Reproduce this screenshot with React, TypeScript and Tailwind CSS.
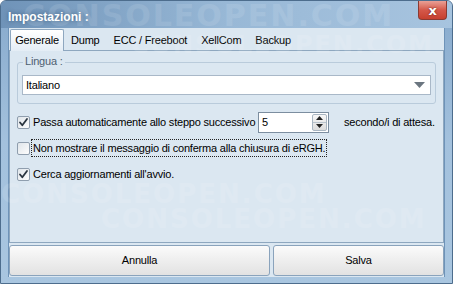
import React from "react";

const font = { fontFamily: "'Liberation Sans', Arial, sans-serif" };

function Check({ checked }: { checked: boolean }) {
  return (
    <div className="w-[13px] h-[13px] rounded-[2px] border border-[#8f9eae] bg-gradient-to-br from-[#dfe5ea] to-[#fdfdfd] flex items-center justify-center shrink-0">
      {checked && (
        <svg width="11" height="11" viewBox="0 0 11 11">
          <path d="M2 5.5 L4.3 8.3 L9 2" fill="none" stroke="#2a3540" strokeWidth="1.8" strokeLinecap="round" strokeLinejoin="round" />
        </svg>
      )}
    </div>
  );
}

export default function App() {
  return (
    <div
      className="relative w-[453px] h-[284px] overflow-hidden rounded-t-[6px] border border-[#4d6d8d] bg-gradient-to-b from-[#86a9cc] via-[#a3c1dd] to-[#a9c6e0] text-[11px] tracking-[-0.2px] text-black flex flex-col"
      style={font}
    >
      {/* title bar */}
      <div className="h-[27px] shrink-0 flex items-start justify-between bg-gradient-to-r from-[#6f93b8] via-[#98b8d6] to-[#a7c4df]">
        <div className="pl-[7px] pt-[10px] text-[12px] font-bold text-white leading-none tracking-normal [text-shadow:0_0_4px_rgba(40,70,100,0.7)]">
          Impostazioni :
        </div>
        <div className="mr-[5px] w-[29px] h-[19px] rounded-b-[4px] border border-t-0 border-[#8a3a32] bg-gradient-to-b from-[#e9a096] via-[#d4584a] to-[#c7402f] flex items-center justify-center">
          <span className="text-white font-bold text-[13px] leading-none [text-shadow:0_0_2px_#5a1a10]" style={{ fontFamily: "'DejaVu Sans', sans-serif" }}>x</span>
        </div>
      </div>

      {/* client */}
      <div className="flex-1 mx-[7px] flex flex-col bg-[#dbe7f1] border-l border-r border-[#6e93b8]">
        {/* tabs */}
        <div className="h-[22px] flex items-end pl-[1px] gap-0">
          <div className="h-[22px] w-[54px] justify-center border border-b-0 border-[#8ea7bf] rounded-t-[2px] bg-gradient-to-b from-[#ffffff] to-[#e4edf5] flex items-center relative top-[1px] z-10">
            Generale
          </div>
          <div className="h-[20px] px-[7px] flex items-center">Dump</div>
          <div className="h-[20px] px-[7px] flex items-center">ECC / Freeboot</div>
          <div className="h-[20px] px-[7px] flex items-center">XellCom</div>
          <div className="h-[20px] px-[7px] flex items-center">Backup</div>
        </div>
        {/* panel */}
        <div className="h-[193px] border border-[#8ea7bf] bg-[#dbe7f1] px-[7px] pt-[6px]">
          <div className="relative border border-[#b9cbdb] rounded-[3px] h-[42px] mt-[5px] px-[4px] pt-[12px]">
            <div className="absolute -top-[7px] left-[5px] px-[2px] bg-[#dbe7f1] text-[#4e6072] leading-none">Lingua :</div>
            <div className="h-[20px] bg-white border border-[#a9b8c8] flex items-center justify-between pl-[3px] pr-[5px]">
              <span>Italiano</span>
              <svg width="11" height="6" viewBox="0 0 11 6"><path d="M0 0 H11 L5.5 6 Z" fill="#6b7680" /></svg>
            </div>
          </div>

          <div className="flex items-center mt-[7px] h-[22px]">
            <Check checked />
            <span className="ml-[3px] w-[225px] shrink-0 whitespace-nowrap overflow-hidden">Passa automaticamente allo steppo successivo</span>
            <div className="w-[71px] h-[21px] shrink-0 bg-white border border-[#7c8ea0] flex items-center justify-between pl-[3px] pr-[1px]">
              <span>5</span>
              <div className="w-[15px] h-[17px] flex flex-col border border-[#a9b6c2] rounded-[2px] bg-gradient-to-b from-[#f7f7f7] to-[#dcdcdc]">
                <div className="flex-1 flex items-center justify-center border-b border-[#b9c3cc]">
                  <svg width="7" height="4" viewBox="0 0 7 4"><path d="M0 4 L3.5 0 L7 4 Z" fill="#222" /></svg>
                </div>
                <div className="flex-1 flex items-center justify-center">
                  <svg width="7" height="4" viewBox="0 0 7 4"><path d="M0 0 L3.5 4 L7 0 Z" fill="#222" /></svg>
                </div>
              </div>
            </div>
            <span className="ml-[15px] whitespace-nowrap">secondo/i di attesa.</span>
          </div>

          <div className="flex items-center mt-[5px] h-[20px]">
            <Check checked={false} />
            <span className="ml-[1px] px-[1px] border border-dotted border-[#222] leading-[16px] whitespace-nowrap">
              Non mostrare il messaggio di conferma alla chiusura di eRGH.
            </span>
          </div>

          <div className="flex items-center mt-[6px] h-[20px]">
            <Check checked />
            <span className="ml-[3px] whitespace-nowrap">Cerca aggiornamenti all'avvio.</span>
          </div>
        </div>
        {/* buttons */}
        <div className="flex gap-[3px] pt-[2px] pb-[1px]">
          <div className="w-[261px] h-[31px] rounded-[3px] border border-[#8aa3bc] bg-gradient-to-b from-[#fbfbfb] via-[#eeeeee] to-[#e2e2e2] flex items-center justify-center">
            Annulla
          </div>
          <div className="flex-1 h-[31px] rounded-[3px] border border-[#8aa3bc] bg-gradient-to-b from-[#fbfbfb] via-[#eeeeee] to-[#e2e2e2] flex items-center justify-center">
            Salva
          </div>
        </div>
      </div>
      <div className="h-[7px] shrink-0" />

      {/* watermark */}
      <div className="pointer-events-none absolute inset-0 font-bold text-white/10 leading-none tracking-[2px]" style={{ fontFamily: "'DejaVu Sans', sans-serif" }}>
        <div className="absolute left-[22px] top-[0px] text-[30px]">CONSOLEOPEN.COM</div>
        <div className="absolute left-[130px] top-[32px] text-[24px]">CONSOLEOPEN.COM</div>
        <div className="absolute left-[100px] top-[205px] text-[26px]">CONSOLEOPEN.COM</div>
        <div className="absolute left-[0px] top-[180px] text-[26px]">CONSOLEOPEN.COM</div>
      </div>
    </div>
  );
}
